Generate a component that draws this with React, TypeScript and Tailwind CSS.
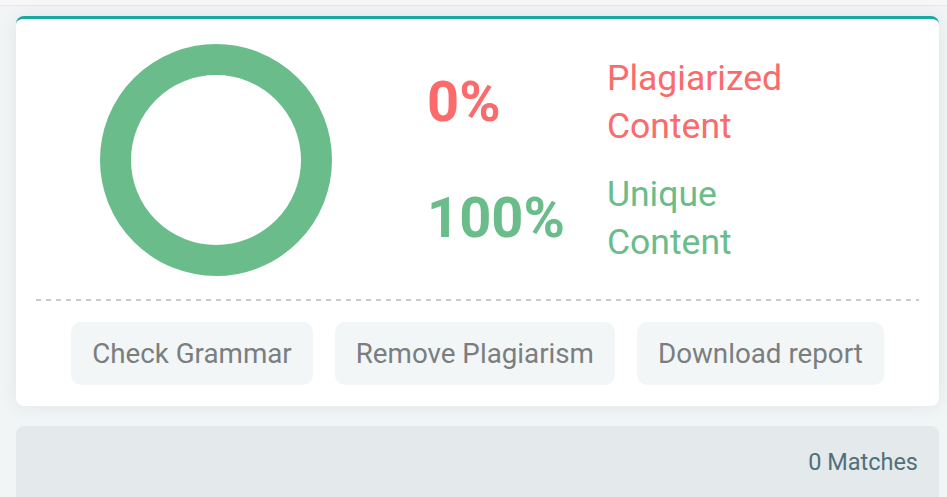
export default function App() {
  return (
    <div className="min-h-screen bg-[#f2f5f6] font-['Roboto',sans-serif] overflow-hidden">
      <div className="h-[6px] bg-[#f7f7f7] border-b border-[#e7e9ea]" />
      <div className="pl-4 pr-2 pt-[10px]">
        {/* result card */}
        <div className="w-[923px] rounded-lg border-t-[3px] border-[#1aa8a2] bg-white shadow-[0_0_18px_rgba(40,70,80,0.09)]">
          <div className="px-5">
            <div className="flex items-center pt-[25px] pb-[23px]">
              <div className="ml-[64px] h-[232px] w-[232px]">
                <svg width="232" height="232" viewBox="0 0 232 232">
                  <circle cx="116" cy="116" r="100.5" fill="none" stroke="#6abd8b" strokeWidth="31" />
                </svg>
              </div>
              <div className="ml-[95px] flex flex-col gap-[20px]">
                <div className="flex items-center">
                  <div className="w-[180px] text-[56px] font-bold leading-none text-[#fb6b6b]">0%</div>
                  <div className="text-[35.5px] leading-[48px] text-[#fb6b6b]">
                    Plagiarized
                    <br />
                    Content
                  </div>
                </div>
                <div className="flex items-center">
                  <div className="w-[180px] text-[56px] font-bold leading-none text-[#6abd8b]">100%</div>
                  <div className="text-[35.5px] leading-[48px] text-[#6abd8b]">
                    Unique
                    <br />
                    Content
                  </div>
                </div>
              </div>
            </div>
            <div className="h-[2px] bg-[linear-gradient(to_right,#cacaca_5px,transparent_5px)] bg-[length:10px_2px]" />
          </div>
          <div className="flex justify-center gap-[22px] pt-[21px] pb-[21px]">
            <button className="h-[63px] rounded-[10px] bg-[#f2f6f7] px-[21px] text-[27.75px] text-[#7a7e7f]">
              Check Grammar
            </button>
            <button className="h-[63px] rounded-[10px] bg-[#f2f6f7] px-[21px] text-[27.75px] text-[#7a7e7f]">
              Remove Plagiarism
            </button>
            <button className="h-[63px] rounded-[10px] bg-[#f2f6f7] px-[21px] text-[27.75px] text-[#7a7e7f]">
              Download report
            </button>
          </div>
        </div>

        {/* matches bar */}
        <div className="mt-5 h-[90px] w-[923px] rounded-t-lg bg-[#e4e9eb] px-[21px] pt-[19px] text-right text-[23.5px] text-[#50707a]">
          0 Matches
        </div>
      </div>
    </div>
  );
}
